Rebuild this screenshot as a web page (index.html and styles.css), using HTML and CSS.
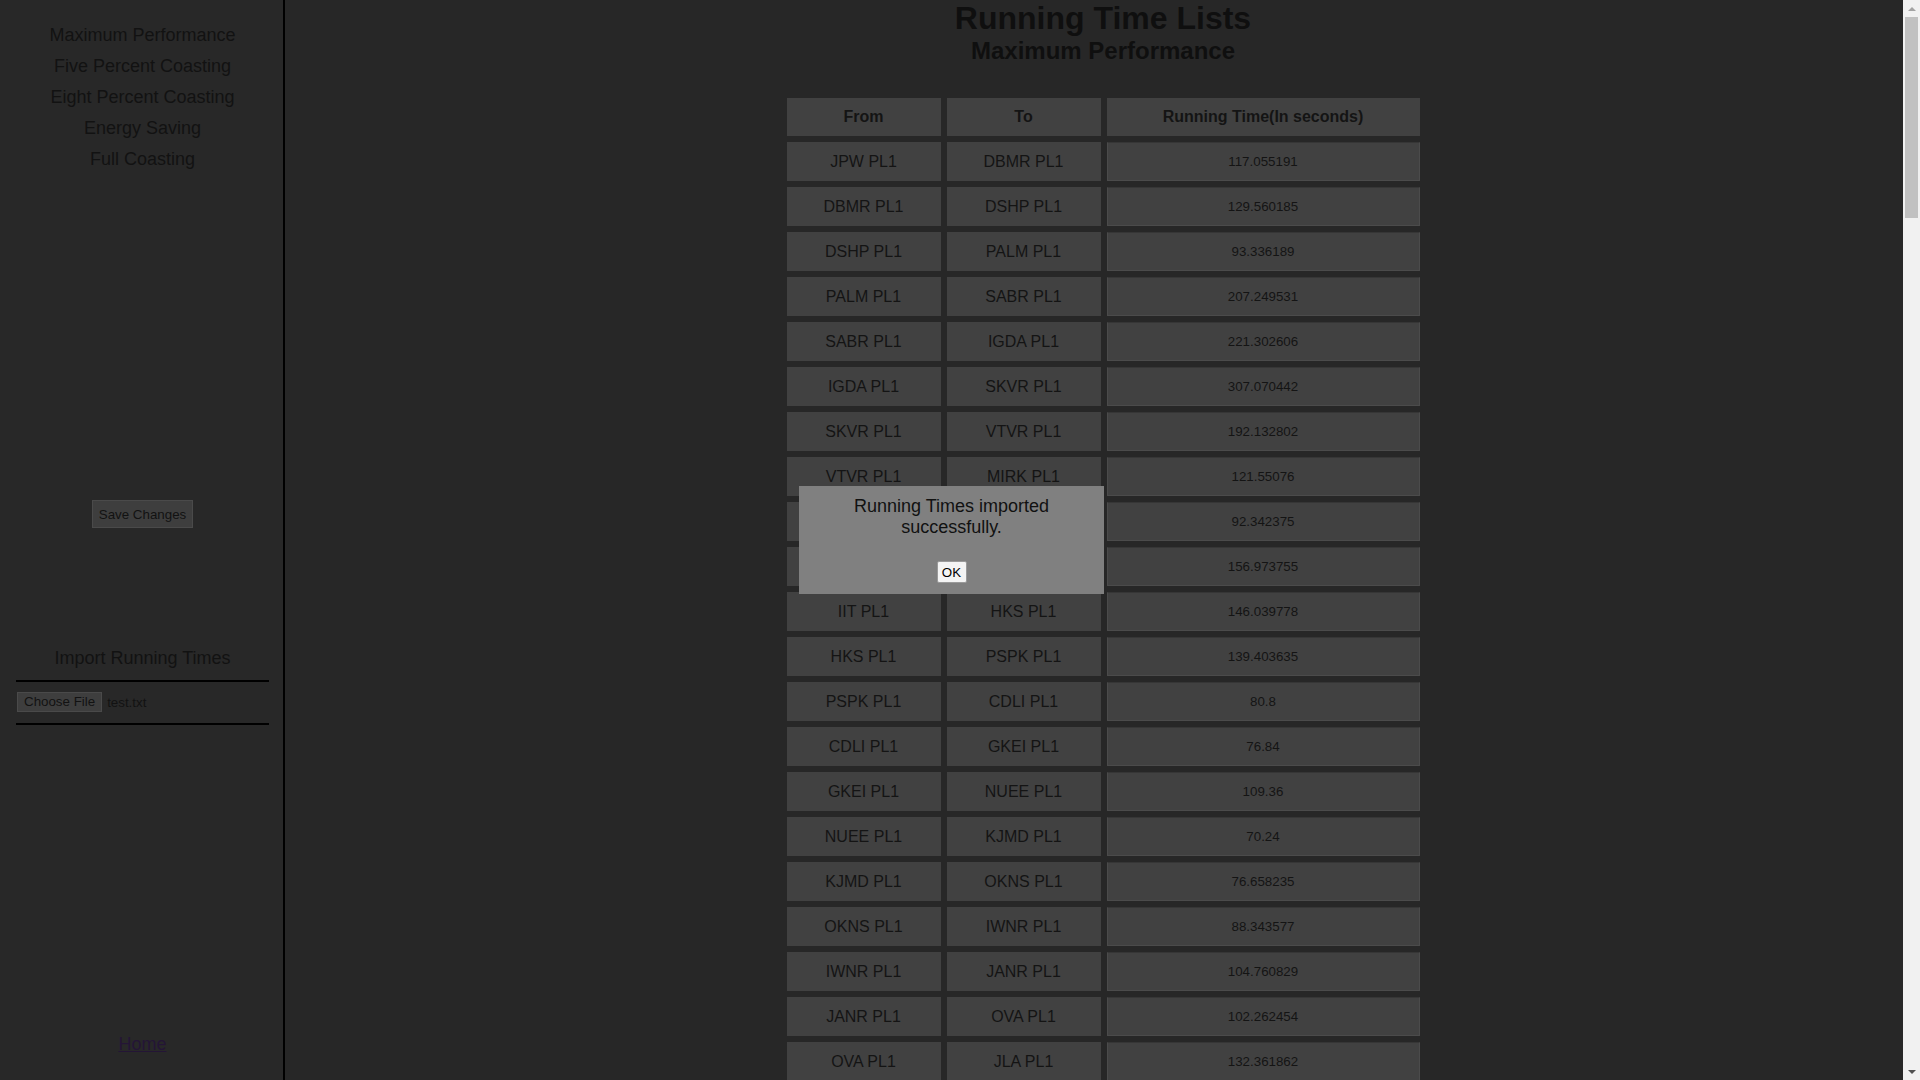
FILE: index.html
```html
<!DOCTYPE html>
<html lang="en">
<head>
<meta charset="utf-8">
<title>Running Time Lists</title>
<link rel="stylesheet" href="styles.css">
</head>
<body>
<div class="app">
  <aside class="sidebar">
    <nav class="menu">
      <div class="menu-item">Maximum Performance</div>
      <div class="menu-item">Five Percent Coasting</div>
      <div class="menu-item">Eight Percent Coasting</div>
      <div class="menu-item">Energy Saving</div>
      <div class="menu-item">Full Coasting</div>
    </nav>
    <div class="save-wrap"><button class="btn-save" type="button">Save Changes</button></div>
    <div class="import-title">Import Running Times</div>
    <div class="file-box">
      <span class="file-btn">Choose File</span>
      <span class="file-name">test.txt</span>
    </div>
    <a class="home" href="#">Home</a>
  </aside>

  <main class="main">
    <h1 class="title">Running Time Lists</h1>
    <h2 class="subtitle">Maximum Performance</h2>
    <table class="times">
      <thead>
        <tr><th class="c-from">From</th><th class="c-to">To</th><th class="c-time">Running Time(In seconds)</th></tr>
      </thead>
      <tbody>
        <tr><td>JPW PL1</td><td>DBMR PL1</td><td class="t"><input class="time-input" type="text" value="117.055191" readonly></td></tr>
        <tr><td>DBMR PL1</td><td>DSHP PL1</td><td class="t"><input class="time-input" type="text" value="129.560185" readonly></td></tr>
        <tr><td>DSHP PL1</td><td>PALM PL1</td><td class="t"><input class="time-input" type="text" value="93.336189" readonly></td></tr>
        <tr><td>PALM PL1</td><td>SABR PL1</td><td class="t"><input class="time-input" type="text" value="207.249531" readonly></td></tr>
        <tr><td>SABR PL1</td><td>IGDA PL1</td><td class="t"><input class="time-input" type="text" value="221.302606" readonly></td></tr>
        <tr><td>IGDA PL1</td><td>SKVR PL1</td><td class="t"><input class="time-input" type="text" value="307.070442" readonly></td></tr>
        <tr><td>SKVR PL1</td><td>VTVR PL1</td><td class="t"><input class="time-input" type="text" value="192.132802" readonly></td></tr>
        <tr><td>VTVR PL1</td><td>MIRK PL1</td><td class="t"><input class="time-input" type="text" value="121.55076" readonly></td></tr>
        <tr><td>MIRK PL1</td><td>RKPM PL1</td><td class="t"><input class="time-input" type="text" value="92.342375" readonly></td></tr>
        <tr><td>RKPM PL1</td><td>IIT PL1</td><td class="t"><input class="time-input" type="text" value="156.973755" readonly></td></tr>
        <tr><td>IIT PL1</td><td>HKS PL1</td><td class="t"><input class="time-input" type="text" value="146.039778" readonly></td></tr>
        <tr><td>HKS PL1</td><td>PSPK PL1</td><td class="t"><input class="time-input" type="text" value="139.403635" readonly></td></tr>
        <tr><td>PSPK PL1</td><td>CDLI PL1</td><td class="t"><input class="time-input" type="text" value="80.8" readonly></td></tr>
        <tr><td>CDLI PL1</td><td>GKEI PL1</td><td class="t"><input class="time-input" type="text" value="76.84" readonly></td></tr>
        <tr><td>GKEI PL1</td><td>NUEE PL1</td><td class="t"><input class="time-input" type="text" value="109.36" readonly></td></tr>
        <tr><td>NUEE PL1</td><td>KJMD PL1</td><td class="t"><input class="time-input" type="text" value="70.24" readonly></td></tr>
        <tr><td>KJMD PL1</td><td>OKNS PL1</td><td class="t"><input class="time-input" type="text" value="76.658235" readonly></td></tr>
        <tr><td>OKNS PL1</td><td>IWNR PL1</td><td class="t"><input class="time-input" type="text" value="88.343577" readonly></td></tr>
        <tr><td>IWNR PL1</td><td>JANR PL1</td><td class="t"><input class="time-input" type="text" value="104.760829" readonly></td></tr>
        <tr><td>JANR PL1</td><td>OVA PL1</td><td class="t"><input class="time-input" type="text" value="102.262454" readonly></td></tr>
        <tr><td>OVA PL1</td><td>JLA PL1</td><td class="t"><input class="time-input" type="text" value="132.361862" readonly></td></tr>
        <tr><td>JLA PL1</td><td>KIKJ PL1</td><td class="t"><input class="time-input" type="text" value="98.514270" readonly></td></tr>
      </tbody>
    </table>
  </main>

  <div class="scrollbar">
    <div class="sb-btn"><span class="arrow-up"></span></div>
    <div class="sb-thumb"></div>
    <div class="sb-fill"></div>
    <div class="sb-btn"><span class="arrow-down"></span></div>
  </div>
</div>

<div class="backdrop">
  <div class="dialog">
    <p class="dialog-text">Running Times imported successfully.</p>
    <button class="btn-ok" type="button">OK</button>
  </div>
</div>
</body>
</html>
```

FILE: styles.css
```css
html, body {
  margin: 0;
  padding: 0;
  height: 1080px;
  overflow: hidden;
  background: #272727;
  font-family: "Liberation Sans", Arial, sans-serif;
  color: #111;
}

.app {
  display: flex;
  height: 1080px;
  overflow: hidden;
}

/* ---------- sidebar ---------- */
.sidebar {
  width: 285px;
  flex: 0 0 285px;
  box-sizing: border-box;
  background: #282828;
  border-right: 2px solid #000;
  display: flex;
  flex-direction: column;
  padding: 20px 0 0 2px;
  text-align: center;
}

.menu {
  display: flex;
  flex-direction: column;
}

.menu-item {
  height: 31px;
  line-height: 31px;
  font-size: 18px;
  color: #121212;
}

.save-wrap {
  margin-top: 325px;
  display: flex;
  justify-content: center;
}

.btn-save {
  height: 28px;
  box-sizing: border-box;
  padding: 0 6px;
  font-family: "Liberation Sans", Arial, sans-serif;
  font-size: 13.333px;
  color: #121212;
  background: #3e3e3e;
  border: 1px solid #4a4a4a;
  border-radius: 0;
}

.import-title {
  margin-top: 120px;
  margin-bottom: 11px;
  font-size: 18px;
  line-height: 21px;
  color: #121212;
}

.file-box {
  margin-left: 14px;
  width: 253px;
  border-top: 2px solid #000;
  border-bottom: 2px solid #000;
  padding: 10px 0 11px;
  display: flex;
  align-items: center;
  gap: 5px;
}

.file-btn {
  height: 20px;
  box-sizing: border-box;
  padding: 0 6px;
  line-height: 18px;
  font-size: 13.333px;
  color: #121212;
  background: #3e3e3e;
  border: 1px solid #4a4a4a;
  margin-left: 1px;
}

.file-name {
  font-size: 13.333px;
  color: #121212;
}

.home {
  margin-top: auto;
  margin-bottom: 25px;
  align-self: center;
  font-size: 18px;
  line-height: 21px;
  color: #241536;
  text-decoration: underline;
}

/* ---------- main ---------- */
.main {
  flex: 1 1 auto;
  padding-left: 18px;
  overflow: hidden;
}

.title {
  margin: 0;
  font-size: 32px;
  line-height: 37px;
  font-weight: bold;
  text-align: center;
  color: #0f0f0f;
}

.subtitle {
  margin: 0 0 27px;
  font-size: 24px;
  line-height: 28px;
  font-weight: bold;
  text-align: center;
  color: #0f0f0f;
}

.times {
  margin: 0 auto;
  border-collapse: separate;
  border-spacing: 6px;
}

.times th,
.times td {
  background: #414141;
  padding: 0;
  text-align: center;
  font-size: 16px;
  color: #141414;
}

.times th {
  height: 38px;
  font-weight: bold;
}

.times td {
  height: 39px;
}

.c-from, .c-to { width: 154px; }
.c-time { width: 313px; }

.times td.t {
  background: transparent;
}

.time-input {
  display: block;
  width: 100%;
  height: 39px;
  box-sizing: border-box;
  margin: 0;
  padding: 0;
  border: 1px solid #4b4b4b;
  border-top-color: #363636;
  background: #414141;
  text-align: center;
  font-family: "Liberation Sans", Arial, sans-serif;
  font-size: 13.333px;
  color: #141414;
  outline: none;
}

/* ---------- fake scrollbar ---------- */
.scrollbar {
  width: 17px;
  flex: 0 0 17px;
  background: #f1f1f1;
  display: flex;
  flex-direction: column;
}

.sb-btn {
  height: 17px;
  display: flex;
  align-items: center;
  justify-content: center;
}

.sb-thumb {
  height: 201px;
  margin: 0 2px;
  background: #c1c1c1;
}

.sb-fill { flex: 1 1 auto; }

.arrow-up {
  width: 0;
  height: 0;
  border-left: 4px solid transparent;
  border-right: 4px solid transparent;
  border-bottom: 4px solid #a3a3a3;
}

.arrow-down {
  width: 0;
  height: 0;
  border-left: 4px solid transparent;
  border-right: 4px solid transparent;
  border-top: 4px solid #505050;
}

/* ---------- dialog overlay ---------- */
.backdrop {
  position: fixed;
  top: 0;
  left: 0;
  right: 17px;
  bottom: 0;
  display: flex;
  align-items: center;
  justify-content: center;
}

.dialog {
  width: 305px;
  box-sizing: border-box;
  padding: 10px 20px 11px;
  background: #808080;
  text-align: center;
}

.dialog-text {
  margin: 0 0 24px;
  font-size: 18px;
  line-height: 20.7px;
  color: #111;
}

.btn-ok {
  width: 30px;
  height: 22px;
  box-sizing: border-box;
  padding: 0;
  font-family: "Liberation Sans", Arial, sans-serif;
  font-size: 13.333px;
  color: #000;
  background: #f4f4f4;
  border: 1px solid #9a9a9a;
  border-radius: 2px;
}
```
